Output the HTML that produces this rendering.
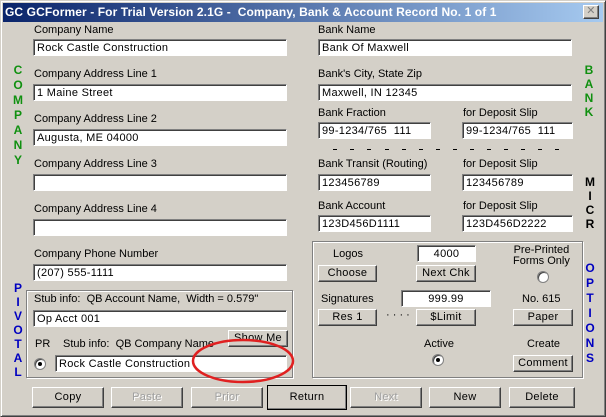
<!DOCTYPE html>
<html><head><style>
*{margin:0;padding:0;box-sizing:border-box}
body{width:606px;height:417px;background:#d4d0c8;font-family:"Liberation Sans",sans-serif;font-size:11px;position:relative;overflow:hidden;color:#000}
.a{position:absolute;white-space:nowrap}
.in{position:absolute;background:#fff;border-top:1px solid #808080;border-left:1px solid #808080;border-right:1px solid #fff;border-bottom:1px solid #fff;box-shadow:inset 1px 1px 0 #404040;height:17px;line-height:16px;padding-left:3px;font-size:11px;letter-spacing:.3px}
.b{position:absolute;background:#d4d0c8;border-top:1px solid #fff;border-left:1px solid #fff;border-right:1px solid #404040;border-bottom:1px solid #404040;box-shadow:inset -1px -1px 0 #808080;text-align:center;font-size:11px;letter-spacing:.3px}
.g{position:absolute;border:1px solid #808080;box-shadow:1px 1px 0 #fff,inset 1px 1px 0 #fff}
.v{position:absolute;font-weight:bold;font-size:12px;line-height:15px;text-align:center;width:12px}
.dis{color:#a0a0a0;text-shadow:1px 1px 0 #fff}
.r{position:absolute;width:12px;height:12px;border-radius:50%;background:#fff;border:1px solid #808080;box-shadow:inset 1px 1px 0 #404040}
.d{position:absolute;top:149px;width:4px;height:1px;background:#000}
</style></head><body>
<div class="a" style="left:0;top:0;width:606px;height:417px;border:1px solid #d4d0c8;border-right-color:#404040;border-bottom-color:#404040;box-shadow:inset 1px 1px 0 #fff,inset -1px -1px 0 #808080"></div>
<div class="a" style="left:3px;top:3px;width:600px;height:19px;background:linear-gradient(to right,#0a246a,#a6caf0)"></div>
<div class="a" style="left:5px;top:4px;color:#fff;font-weight:bold;font-size:12px;line-height:16px;letter-spacing:.1px">GC GCFormer - For Trial Version 2.1G -&nbsp; Company, Bank &amp; Account Record No. 1 of 1</div>
<div class="b" style="left:583px;top:5px;width:16px;height:14px;line-height:11px;color:#808080;font-size:11px">✕</div>

<div class="a" style="left:34px;top:24px">Company Name</div>
<div class="in" style="left:33px;top:39px;width:254px">Rock Castle Construction</div>
<div class="a" style="left:34px;top:68px">Company Address Line 1</div>
<div class="in" style="left:33px;top:84px;width:254px">1 Maine Street</div>
<div class="a" style="left:34px;top:113px">Company Address Line 2</div>
<div class="in" style="left:33px;top:129px;width:254px">Augusta, ME 04000</div>
<div class="a" style="left:34px;top:158px">Company Address Line 3</div>
<div class="in" style="left:33px;top:174px;width:254px"></div>
<div class="a" style="left:34px;top:203px">Company Address Line 4</div>
<div class="in" style="left:33px;top:219px;width:254px"></div>
<div class="a" style="left:34px;top:248px">Company Phone Number</div>
<div class="in" style="left:33px;top:264px;width:254px">(207) 555-1111</div>

<div class="v" style="left:12px;top:63px;color:#109010">C<br>O<br>M<br>P<br>A<br>N<br>Y</div>
<div class="v" style="left:12px;top:281px;color:#0000c0;line-height:14px">P<br>I<br>V<br>O<br>T<br>A<br>L</div>

<div class="g" style="left:26px;top:290px;width:267px;height:88px"></div>
<div class="a" style="left:34px;top:293px">Stub info:&nbsp; QB Account Name,&nbsp; Width = 0.579"</div>
<div class="in" style="left:33px;top:310px;width:254px">Op Acct 001</div>
<div class="b" style="left:228px;top:330px;width:60px;height:17px;line-height:14px">Show Me</div>
<div class="a" style="left:35px;top:338px">PR</div>
<div class="a" style="left:63px;top:338px">Stub info:&nbsp; QB Company Name</div>
<div class="r" style="left:34px;top:358px"><div style="position:absolute;left:3px;top:3px;width:4px;height:4px;background:#000;border-radius:50%"></div></div>
<div class="in" style="left:55px;top:355px;width:232px">Rock Castle Construction</div>
<svg class="a" style="left:190px;top:336px" width="106" height="50"><ellipse cx="53" cy="25" rx="50" ry="21" fill="none" stroke="#e02020" stroke-width="2.5"/></svg>

<div class="a" style="left:318px;top:24px">Bank Name</div>
<div class="in" style="left:318px;top:39px;width:254px">Bank Of Maxwell</div>
<div class="a" style="left:318px;top:68px">Bank's City, State Zip</div>
<div class="in" style="left:318px;top:84px;width:254px">Maxwell, IN 12345</div>
<div class="a" style="left:318px;top:107px">Bank Fraction</div>
<div class="in" style="left:318px;top:122px;width:113px">99-1234/765&nbsp; 111</div>
<div class="a" style="left:463px;top:107px">for Deposit Slip</div>
<div class="in" style="left:462px;top:122px;width:111px">99-1234/765&nbsp; 111</div>
<div class="d" style="left:333px"></div><div class="d" style="left:350px"></div><div class="d" style="left:367px"></div><div class="d" style="left:385px"></div><div class="d" style="left:402px"></div><div class="d" style="left:419px"></div><div class="d" style="left:436px"></div><div class="d" style="left:453px"></div><div class="d" style="left:470px"></div><div class="d" style="left:487px"></div><div class="d" style="left:504px"></div><div class="d" style="left:521px"></div><div class="d" style="left:538px"></div><div class="d" style="left:555px"></div>
<div class="a" style="left:318px;top:158px">Bank Transit (Routing)</div>
<div class="in" style="left:318px;top:174px;width:113px">123456789</div>
<div class="a" style="left:463px;top:158px">for Deposit Slip</div>
<div class="in" style="left:462px;top:174px;width:111px">123456789</div>
<div class="a" style="left:318px;top:200px">Bank Account</div>
<div class="in" style="left:318px;top:215px;width:113px">123D456D1111</div>
<div class="a" style="left:463px;top:200px">for Deposit Slip</div>
<div class="in" style="left:462px;top:215px;width:111px">123D456D2222</div>

<div class="v" style="left:583px;top:63px;color:#109010;line-height:14px">B<br>A<br>N<br>K</div>
<div class="v" style="left:584px;top:175px;color:#000;line-height:14px">M<br>I<br>C<br>R</div>
<div class="v" style="left:584px;top:261px;color:#0000c0;line-height:15px">O<br>P<br>T<br>I<br>O<br>N<br>S</div>

<div class="g" style="left:312px;top:241px;width:271px;height:137px"></div>
<div class="a" style="left:333px;top:248px">Logos</div>
<div class="b" style="left:318px;top:265px;width:59px;height:17px;line-height:14px">Choose</div>
<div class="in" style="left:417px;top:245px;width:59px;text-align:center;padding:0">4000</div>
<div class="b" style="left:416px;top:265px;width:60px;height:17px;line-height:14px">Next Chk</div>
<div class="a" style="left:513px;top:245px;line-height:11px;text-align:center">Pre-Printed<br>Forms Only</div>
<div class="r" style="left:537px;top:271px"></div>
<div class="a" style="left:321px;top:293px">Signatures</div>
<div class="in" style="left:401px;top:290px;width:90px;text-align:center;padding:0">999.99</div>
<div class="a" style="left:522px;top:293px">No. 615</div>
<div class="b" style="left:318px;top:309px;width:59px;height:17px;line-height:14px">Res 1</div>
<div class="a" style="left:386px;top:309px">· · · ·</div>
<div class="b" style="left:416px;top:309px;width:60px;height:17px;line-height:14px">$Limit</div>
<div class="b" style="left:513px;top:309px;width:60px;height:17px;line-height:14px">Paper</div>
<div class="a" style="left:424px;top:338px">Active</div>
<div class="r" style="left:432px;top:354px"><div style="position:absolute;left:3px;top:3px;width:4px;height:4px;background:#000;border-radius:50%"></div></div>
<div class="a" style="left:527px;top:338px">Create</div>
<div class="b" style="left:513px;top:355px;width:60px;height:17px;line-height:14px">Comment</div>

<div class="b" style="left:32px;top:387px;width:72px;height:21px;line-height:18px">Copy</div>
<div class="b dis" style="left:111px;top:387px;width:72px;height:21px;line-height:18px">Paste</div>
<div class="b dis" style="left:191px;top:387px;width:72px;height:21px;line-height:18px">Prior</div>
<div class="b" style="left:267px;top:385px;width:80px;height:25px;line-height:22px;outline:1px solid #000;outline-offset:-1px">Return</div>
<div class="b dis" style="left:350px;top:387px;width:72px;height:21px;line-height:18px">Next</div>
<div class="b" style="left:429px;top:387px;width:72px;height:21px;line-height:18px">New</div>
<div class="b" style="left:509px;top:387px;width:66px;height:21px;line-height:18px">Delete</div>
</body></html>
